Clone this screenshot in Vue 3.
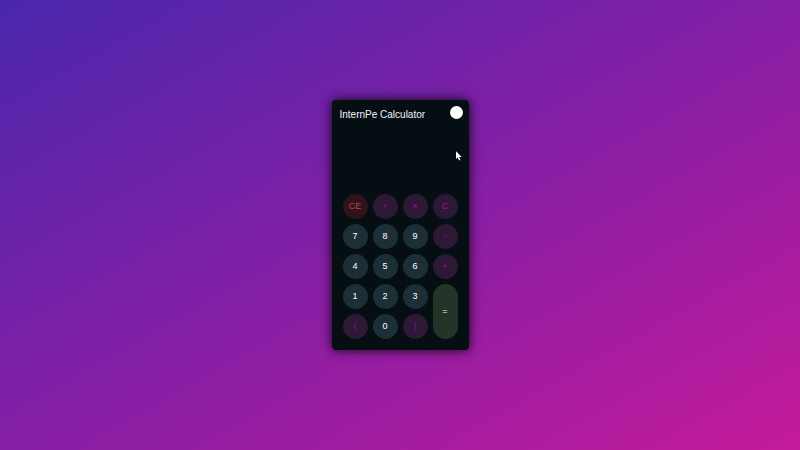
<script setup>
import { ref } from 'vue'

const expression = ref('')
const light = ref(false)

const keys = [
  { label: 'CE', kind: 'clear' },
  { label: '÷', kind: 'operator' },
  { label: '×', kind: 'operator' },
  { label: 'C', kind: 'operator' },
  { label: '7', kind: 'digit' },
  { label: '8', kind: 'digit' },
  { label: '9', kind: 'digit' },
  { label: '-', kind: 'operator' },
  { label: '4', kind: 'digit' },
  { label: '5', kind: 'digit' },
  { label: '6', kind: 'digit' },
  { label: '+', kind: 'operator' },
  { label: '1', kind: 'digit' },
  { label: '2', kind: 'digit' },
  { label: '3', kind: 'digit' },
  { label: '=', kind: 'equals' },
  { label: '(', kind: 'operator bracket' },
  { label: '0', kind: 'digit' },
  { label: ')', kind: 'operator bracket' }
]

function calculate(text) {
  const tokens = text.match(/\d+|[-+×÷()]/g) || []
  let at = 0
  function factor() {
    const token = tokens[at++]
    if (token === '-') return -factor()
    if (token === '(') {
      const value = sum()
      at++
      return value
    }
    return Number(token)
  }
  function product() {
    let value = factor()
    while (tokens[at] === '×' || tokens[at] === '÷') {
      value = tokens[at++] === '×' ? value * factor() : value / factor()
    }
    return value
  }
  function sum() {
    let value = product()
    while (tokens[at] === '+' || tokens[at] === '-') {
      value = tokens[at++] === '+' ? value + product() : value - product()
    }
    return value
  }
  return String(sum())
}

function press(label) {
  if (label === 'CE') expression.value = ''
  else if (label === 'C') expression.value = expression.value.slice(0, -1)
  else if (label === '=') expression.value = expression.value && calculate(expression.value)
  else expression.value += label
}
</script>

<template>
  <main class="page">
    <section class="calculator" :class="{ light }">
      <header class="header">
        <h1 class="title">InternPe Calculator</h1>
        <button class="toggle" type="button" aria-label="Toggle theme" @click="light = !light"></button>
      </header>
      <input v-model="expression" class="display" type="text" aria-label="Result" readonly />
      <div class="keys">
        <button
          v-for="key in keys"
          :key="key.label"
          type="button"
          class="key"
          :class="key.kind"
          @click="press(key.label)"
        >{{ key.label }}</button>
      </div>
      <svg class="pointer" viewBox="0 0 12 19" aria-hidden="true">
        <path d="M0 0v15.500l3.500-3.200 2.600 6 2.700-1.200-2.600-5.800H11.500z" fill="#fff" />
      </svg>
    </section>
  </main>
</template>

<style>
body {
  margin: 0;
}
</style>

<style scoped>
.page {
  min-height: 100vh;
  display: flex;
  align-items: center;
  justify-content: center;
  background: linear-gradient(to bottom right, #4a27ac, #851fa5, #c41a9a);
  font-family: "Liberation Sans", Arial, sans-serif;
}

.calculator {
  position: relative;
  box-sizing: border-box;
  padding: 6px 11px 11px;
  border-radius: 4px;
  background: #050e13;
  box-shadow: 0 0 12px rgba(0, 0, 0, 0.9);
}

.header {
  display: flex;
  justify-content: space-between;
  margin: 0 -5px 0 -3px;
}

.title {
  margin: 0;
  padding-top: 3px;
  color: #f4f5f6;
  font-size: 10px;
  font-weight: 400;
  line-height: 12px;
  white-space: nowrap;
}

.toggle {
  width: 13px;
  height: 13px;
  padding: 0;
  border: 0;
  border-radius: 50%;
  background: #fff;
  cursor: pointer;
}

.display {
  display: block;
  box-sizing: border-box;
  width: 115px;
  height: 60px;
  margin: 3px 0 10px;
  padding: 0;
  border: 0;
  outline: 0;
  background: transparent;
  color: #fff;
  font: 16px "Liberation Sans", Arial, sans-serif;
  text-align: right;
}

.keys {
  display: grid;
  grid-template-columns: repeat(4, 25px);
  grid-auto-rows: 25px;
  gap: 5px;
}

.key {
  padding: 0 0 2px;
  border: 0;
  border-radius: 13px;
  font: 9px "Liberation Sans", Arial, sans-serif;
  cursor: pointer;
}

.digit {
  background: #1d2f36;
  color: #fff;
}

.operator {
  background: #2d1835;
  color: #a80bb0;
}

.bracket {
  color: #8c0996;
}

.clear {
  background: #2d141a;
  color: #c83a4c;
}

.equals {
  grid-column: 4;
  grid-row: 4 / span 2;
  background: #243426;
  color: #f1f3ef;
}

.light {
  background: #f4f5f6;
}

.light .title,
.light .display {
  color: #050e13;
}

.light .toggle {
  background: #050e13;
}

.pointer {
  position: absolute;
  top: 51px;
  right: 7px;
  width: 6px;
  height: 10px;
  pointer-events: none;
}
</style>
